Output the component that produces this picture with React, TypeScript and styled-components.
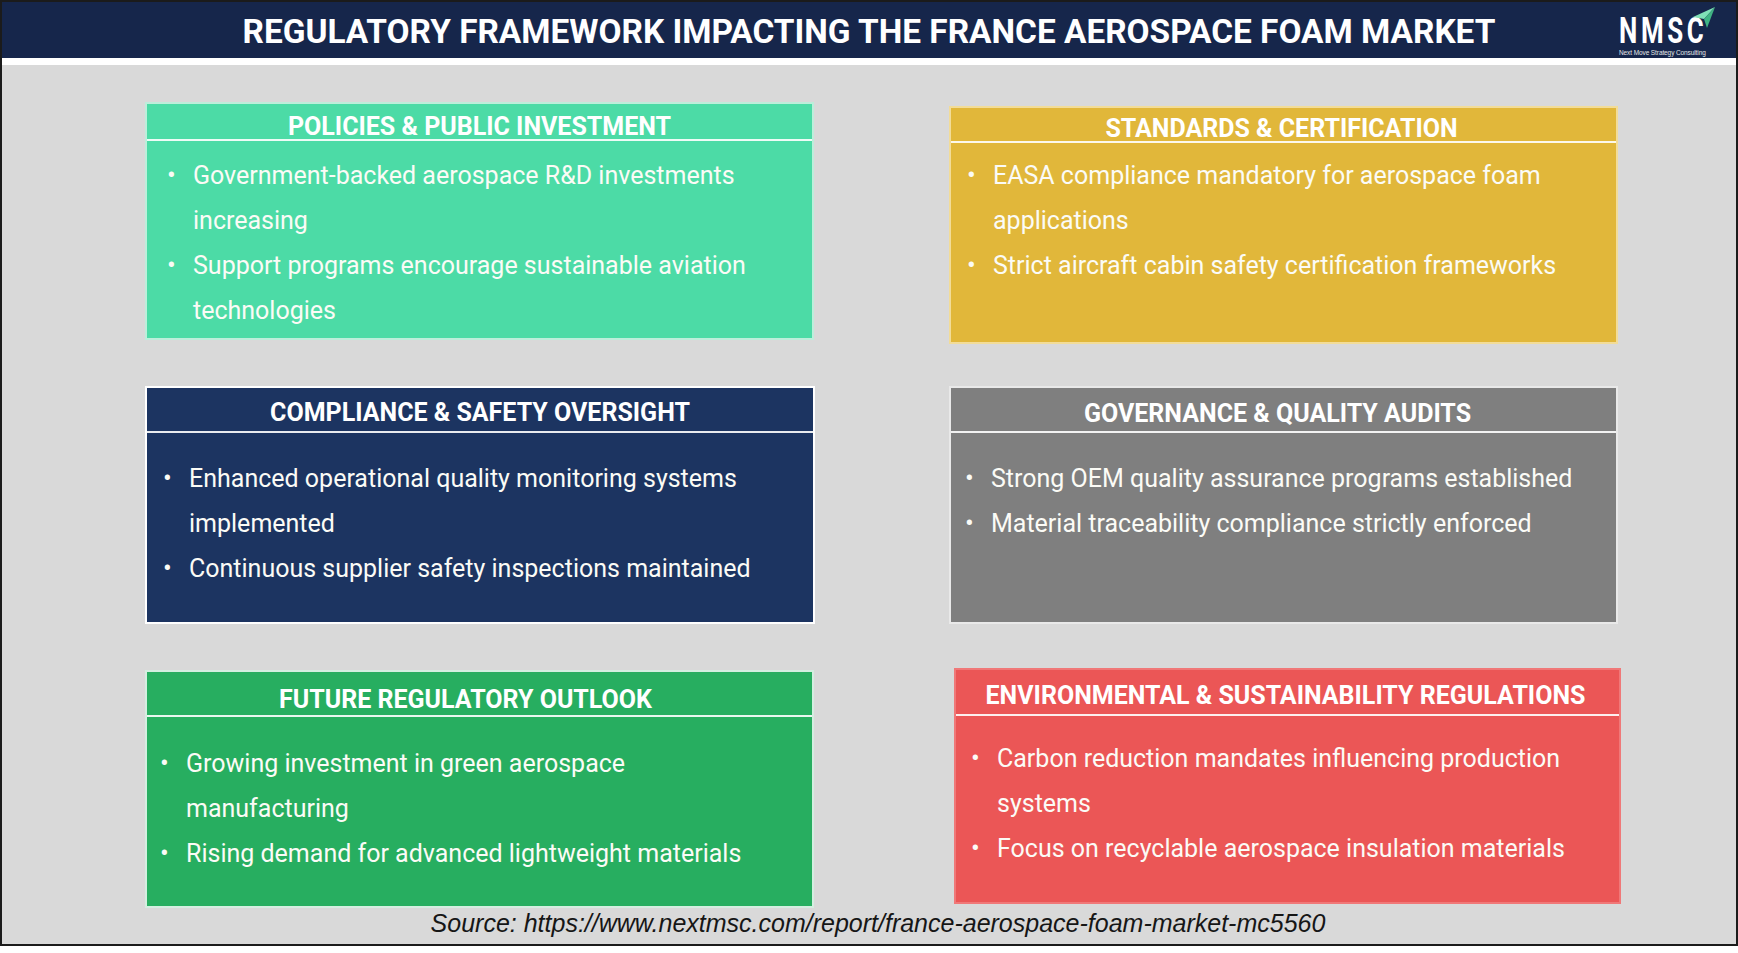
import React from "react";
import styled, { createGlobalStyle } from "styled-components";

const GlobalStyle = createGlobalStyle`
  html, body { margin: 0; padding: 0; background: #ffffff; }
  * { box-sizing: border-box; }
`;

const Frame = styled.div`
  width: 1738px;
  height: 946px;
  border: 2px solid #1b1b1b;
  background: #ffffff;
  display: flex;
  flex-direction: column;
  overflow: hidden;
`;

const Header = styled.header`
  height: 56px;
  background: #16264b;
  display: grid;
  grid-template-columns: 1fr auto 1fr;
  align-items: center;
  margin-bottom: 7px;
`;

const Title = styled.h1`
  grid-column: 2;
  margin: 0;
  padding-top: 2px;
  color: #ffffff;
  font-family: Roboto, "Liberation Sans", sans-serif;
  font-weight: 700;
  font-size: 33.4px;
  white-space: nowrap;
`;

const Logo = styled.div`
  grid-column: 3;
  align-self: start;
  justify-self: end;
  width: 104px;
  margin-right: 13px;
  padding-top: 16px;
  display: flex;
  flex-direction: column;
  align-items: flex-start;
  position: relative;
`;

const LogoWord = styled.div`
  color: #ffffff;
  font-family: Roboto, "Liberation Sans", sans-serif;
  font-weight: 700;
  font-size: 36px;
  line-height: 27px;
  letter-spacing: 5px;
  white-space: nowrap;
  transform: scaleX(0.72);
  transform-origin: left center;
`;

const LogoTag = styled.div`
  color: #e6e6e6;
  font-family: "Liberation Sans", Arial, sans-serif;
  font-size: 6.5px;
  line-height: 8px;
  margin-top: 4px;
  white-space: nowrap;
  letter-spacing: -0.1px;
`;

const Plane = styled.svg`
  position: absolute;
  top: 5px;
  left: 73px;
`;

const Main = styled.main`
  flex: 1;
  background: #d9d9d9;
  padding: 37px 0 0 143px;
  display: flex;
  flex-direction: column;
`;

const Grid = styled.div`
  display: grid;
  grid-template-columns: 667px 667px;
  grid-template-rows: 237px 237px 237px;
  column-gap: 137px;
  row-gap: 46px;
`;

const Card = styled.section<{ $bg: string; $dy: number; $dx: number; $w: number; $h: number; $border: string }>`
  background: ${(p) => p.$bg};
  width: ${(p) => p.$w}px;
  height: ${(p) => p.$h}px;
  margin-top: ${(p) => p.$dy}px;
  margin-left: ${(p) => p.$dx}px;
  border: 2px solid ${(p) => p.$border};
  display: flex;
  flex-direction: column;
`;

const CardHead = styled.h2<{ $h: number; $tp: number; $shift: number }>`
  margin: 0;
  height: ${(p) => p.$h}px;
  flex: none;
  display: flex;
  align-items: center;
  justify-content: center;
  padding-top: ${(p) => p.$tp}px;
  padding-right: ${(p) => p.$shift}px;
  border-bottom: 2px solid rgba(255, 255, 255, 0.9);
  color: #ffffff;
  font-family: Roboto, "Liberation Sans", sans-serif;
  font-weight: 700;
  font-size: 25px;
  white-space: nowrap;
`;

const List = styled.ul<{ $pt: number; $pl: number; $pr: number }>`
  list-style: none;
  margin: 0;
  padding: ${(p) => p.$pt}px ${(p) => p.$pr}px 0 ${(p) => p.$pl}px;
`;

const Item = styled.li<{ $bw: number }>`
  display: grid;
  grid-template-columns: ${(p) => p.$bw}px 1fr;
  color: #fbfbf6;
  font-family: Roboto, "Liberation Sans", sans-serif;
  font-size: 25px;
  line-height: 45px;
`;

const Bullet = styled.span`
  font-size: 26px;
`;

const Source = styled.p`
  margin: 3px 0 0 -125px;
  text-align: center;
  font-family: "Liberation Sans", Arial, sans-serif;
  font-style: italic;
  font-size: 25px;
  line-height: 30px;
  color: #161616;
`;

type CardData = {
  title: string;
  bg: string;
  border: string;
  items: string[];
  head: number;
  tp: number;
  shift: number;
  pt: number;
  pl: number;
  pr: number;
  bw: number;
  dy: number;
  dx: number;
  w: number;
  h: number;
};

const cards: CardData[] = [
  {
    title: "POLICIES & PUBLIC INVESTMENT",
    bg: "#4cdba6",
    border: "#bdeedb",
    items: [
      "Government-backed aerospace R&D investments increasing",
      "Support programs encourage sustainable aviation technologies",
    ],
    head: 37,
    tp: 10,
    shift: 0,
    pt: 12,
    pl: 20,
    pr: 10,
    bw: 26,
    dy: 0,
    dx: 0,
    w: 669,
    h: 238,
  },
  {
    title: "STANDARDS & CERTIFICATION",
    bg: "#e1b73a",
    border: "#f2dc98",
    items: [
      "EASA compliance mandatory for aerospace foam applications",
      "Strict aircraft cabin safety certification frameworks",
    ],
    head: 35,
    tp: 8,
    shift: 4,
    pt: 10,
    pl: 16,
    pr: 10,
    bw: 26,
    dy: 4,
    dx: 0,
    w: 669,
    h: 238,
  },
  {
    title: "COMPLIANCE & SAFETY OVERSIGHT",
    bg: "#1c3461",
    border: "#ffffff",
    items: [
      "Enhanced operational quality monitoring systems implemented",
      "Continuous supplier safety inspections maintained",
    ],
    head: 45,
    tp: 6,
    shift: 0,
    pt: 23,
    pl: 16,
    pr: 10,
    bw: 26,
    dy: 1,
    dx: 0,
    w: 670,
    h: 238,
  },
  {
    title: "GOVERNANCE & QUALITY AUDITS",
    bg: "#7f7f7f",
    border: "#e9e9e9",
    items: [
      "Strong OEM quality assurance programs established",
      "Material traceability compliance strictly enforced",
    ],
    head: 45,
    tp: 8,
    shift: 12,
    pt: 23,
    pl: 14,
    pr: 10,
    bw: 26,
    dy: 1,
    dx: 0,
    w: 669,
    h: 238,
  },
  {
    title: "FUTURE REGULATORY OUTLOOK",
    bg: "#27ae60",
    border: "#d4eee0",
    items: [
      "Growing investment in green aerospace manufacturing",
      "Rising demand for advanced lightweight materials",
    ],
    head: 45,
    tp: 12,
    shift: 28,
    pt: 24,
    pl: 13,
    pr: 40,
    bw: 26,
    dy: 2,
    dx: 0,
    w: 669,
    h: 238,
  },
  {
    title: "ENVIRONMENTAL & SUSTAINABILITY REGULATIONS",
    bg: "#eb5656",
    border: "#f07878",
    items: [
      "Carbon reduction mandates influencing production systems",
      "Focus on recyclable aerospace insulation materials",
    ],
    head: 46,
    tp: 7,
    shift: 4,
    pt: 20,
    pl: 15,
    pr: 10,
    bw: 26,
    dy: 0,
    dx: 5,
    w: 667,
    h: 236,
  },
];

export default function App() {
  return (
    <>
      <GlobalStyle />
      <Frame>
        <Header>
          <Title>REGULATORY FRAMEWORK IMPACTING THE FRANCE AEROSPACE FOAM MARKET</Title>
          <Logo>
            <LogoWord>NMSC</LogoWord>
            <LogoTag>Next Move Strategy Consulting</LogoTag>
            <Plane width="24" height="22" viewBox="0 0 24 22">
              <polygon points="1,10 23,0 12,12" fill="#7fe0b6" />
              <polygon points="12,12 23,0 15,21" fill="#3fb383" />
            </Plane>
          </Logo>
        </Header>
        <Main>
          <Grid>
            {cards.map((c) => (
              <Card key={c.title} $bg={c.bg} $border={c.border} $dy={c.dy} $dx={c.dx} $w={c.w} $h={c.h}>
                <CardHead $h={c.head} $tp={c.tp} $shift={c.shift}>
                  {c.title}
                </CardHead>
                <List $pt={c.pt} $pl={c.pl} $pr={c.pr}>
                  {c.items.map((t) => (
                    <Item key={t} $bw={c.bw}>
                      <Bullet>•</Bullet>
                      <span>{t}</span>
                    </Item>
                  ))}
                </List>
              </Card>
            ))}
          </Grid>
          <Source>Source: https://www.nextmsc.com/report/france-aerospace-foam-market-mc5560</Source>
        </Main>
      </Frame>
    </>
  );
}
